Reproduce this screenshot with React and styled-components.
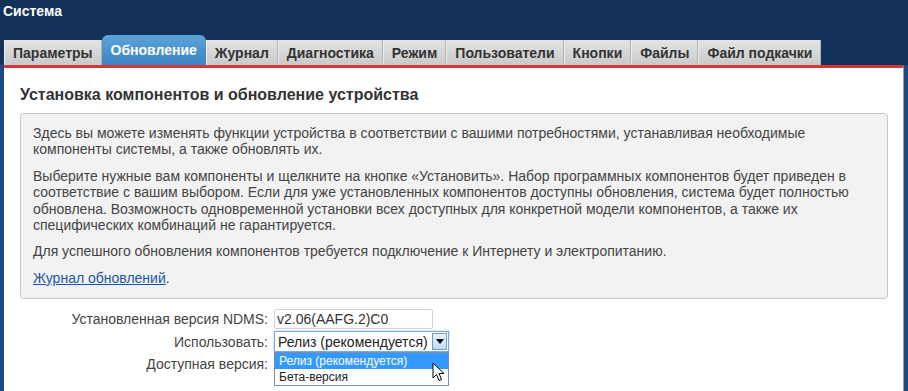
import React from "react";
import styled, { createGlobalStyle } from "styled-components";

const GlobalStyle = createGlobalStyle`
  html, body {
    margin: 0;
    padding: 0;
    background: #13325a;
    font-family: "Liberation Sans", Arial, sans-serif;
  }
`;

// Top header with the section title
const Header = styled.div`
  height: 35px;
  padding: 3px 3px 0;
  box-sizing: border-box;
`;

const Title = styled.div`
  color: #fff;
  font-size: 14px;
  font-weight: bold;
  line-height: 16px;
`;

const TabBar = styled.div`
  display: flex;
  align-items: flex-end;
  height: 30px;
  padding-left: 4px;
`;

const Tab = styled.div`
  box-sizing: border-box;
  height: ${(p) => (p.active ? "30px" : "25px")};
  padding: 0 ${(p) => (p.active ? "9px" : "8px")};
  padding-top: ${(p) => (p.active ? "0" : "1px")};
  display: flex;
  align-items: center;
  font-size: 14px;
  font-weight: bold;
  color: ${(p) => (p.active ? "#fff" : "#333")};
  background: ${(p) =>
    p.active
      ? "linear-gradient(#5da3d8, #3b84c3)"
      : "linear-gradient(#e4e4e4, #c9c9c9)"};
  border-radius: ${(p) => (p.active ? "6px 6px 0 0" : "0")};
  border-right: ${(p) => (p.active ? "none" : "1px solid #b3b3b3")};
  border-left: ${(p) => (p.active ? "none" : "1px solid #ececec")};
  white-space: nowrap;
`;

const Body = styled.div`
  background: #1b4a86;
  padding: 0 4px;
  min-height: 326px;
  display: flex;
`;

const Panel = styled.div`
  flex: 1;
  background: #fff;
  border-top: 3px solid #d13a34;
  border-right: 1px solid #9a9a9a;
  padding: 0 15px 0 16px;
`;

const Heading = styled.h2`
  margin: 17px 0 0;
  font-size: 16px;
  line-height: 19px;
  font-weight: bold;
  color: #333;
`;

const InfoBox = styled.div`
  margin-top: 9px;
  background: #f2f2f2;
  border: 1px solid #c6c6c6;
  border-radius: 4px;
  padding: 11px 13px 12px 12px;
  font-size: 14px;
  line-height: 16.4px;
  color: #444;
`;

const Para = styled.p`
  margin: 0 0 10px;
  &:last-child {
    margin-bottom: 0;
  }
`;

const Link = styled.a`
  color: #1a56a8;
  text-decoration: underline;
`;

const Form = styled.div`
  margin-top: 10px;
  display: grid;
  grid-template-columns: 248px auto;
  column-gap: 6px;
  row-gap: 2px;
  align-items: center;
  font-size: 14px;
  color: #444;
`;

const Label = styled.div`
  text-align: right;
  line-height: 16px;
`;

const Field = styled.div`
  position: relative;
  height: ${(p) => p.h || 20}px;
  display: flex;
  align-items: center;
`;

const TextInput = styled.div`
  box-sizing: border-box;
  width: 159px;
  height: 20px;
  border: 1px solid #d4d4d4;
  border-radius: 2px;
  padding: 0 2px;
  line-height: 18px;
  color: #333;
`;

const Select = styled.div`
  box-sizing: border-box;
  width: 175px;
  height: 21px;
  border: 1px solid #7aa9e0;
  box-shadow: 0 0 2px #9cc4f0;
  display: flex;
  align-items: center;
  justify-content: space-between;
  padding-left: 3px;
  color: #222;
  background: #fff;
  white-space: nowrap;
`;

const ArrowBtn = styled.div`
  flex: none;
  width: 15px;
  height: 17px;
  margin-right: 1px;
  box-sizing: border-box;
  border: 1px solid #6d9bd0;
  background: linear-gradient(#eaf4fc, #bcdcf4);
  display: flex;
  align-items: center;
  justify-content: center;
`;

const DropList = styled.div`
  position: absolute;
  top: 21px;
  left: 0;
  width: 175px;
  box-sizing: border-box;
  border: 1px solid #7890b0;
  background: #fff;
  font-size: 12px;
  z-index: 2;
`;

const Option = styled.div`
  height: 16px;
  line-height: 16px;
  padding-left: 4px;
  color: ${(p) => (p.selected ? "#fff" : "#222")};
  background: ${(p) => (p.selected ? "#3399ff" : "#fff")};
`;

const Cursor = styled.svg`
  position: absolute;
  left: 158px;
  top: 31px;
  z-index: 3;
`;

const tabs = [
  "Параметры",
  "Обновление",
  "Журнал",
  "Диагностика",
  "Режим",
  "Пользователи",
  "Кнопки",
  "Файлы",
  "Файл подкачки",
];

export default function App() {
  return (
    <>
      <GlobalStyle />
      <Header>
        <Title>Система</Title>
      </Header>
      <TabBar>
        {tabs.map((t) => (
          <Tab key={t} active={t === "Обновление"}>
            {t}
          </Tab>
        ))}
      </TabBar>
      <Body>
        <Panel>
          <Heading>Установка компонентов и обновление устройства</Heading>
          <InfoBox>
            <Para>
              Здесь вы можете изменять функции устройства в соответствии с вашими
              потребностями, устанавливая необходимые компоненты системы, а также
              обновлять их.
            </Para>
            <Para>
              Выберите нужные вам компоненты и щелкните на кнопке «Установить».
              Набор программных компонентов будет приведен в соответствие с вашим
              выбором. Если для уже установленных компонентов доступны обновления,
              система будет полностью обновлена. Возможность одновременной
              установки всех доступных для конкретной модели компонентов, а также
              их специфических комбинаций не гарантируется.
            </Para>
            <Para>
              Для успешного обновления компонентов требуется подключение к
              Интернету и электропитанию.
            </Para>
            <Para>
              <Link href="#">Журнал обновлений</Link>.
            </Para>
          </InfoBox>
          <Form>
            <Label>Установленная версия NDMS:</Label>
            <Field>
              <TextInput>v2.06(AAFG.2)C0</TextInput>
            </Field>
            <Label>Использовать:</Label>
            <Field h={21}>
              <Select>
                <span>Релиз (рекомендуется)</span>
                <ArrowBtn>
                  <svg width="8" height="5" viewBox="0 0 8 5">
                    <path d="M0 0h8L4 5z" fill="#000" />
                  </svg>
                </ArrowBtn>
              </Select>
              <DropList>
                <Option selected>Релиз (рекомендуется)</Option>
                <Option>Бета-версия</Option>
              </DropList>
              <Cursor width="14" height="21" viewBox="0 0 14 21">
                <path
                  d="M1 1v15l3.5-3.5 2.5 6 2.5-1-2.5-6H12z"
                  fill="#fff"
                  stroke="#000"
                  strokeWidth="1"
                />
              </Cursor>
            </Field>
            <Label>Доступная версия:</Label>
            <Field />
          </Form>
        </Panel>
      </Body>
    </>
  );
}
